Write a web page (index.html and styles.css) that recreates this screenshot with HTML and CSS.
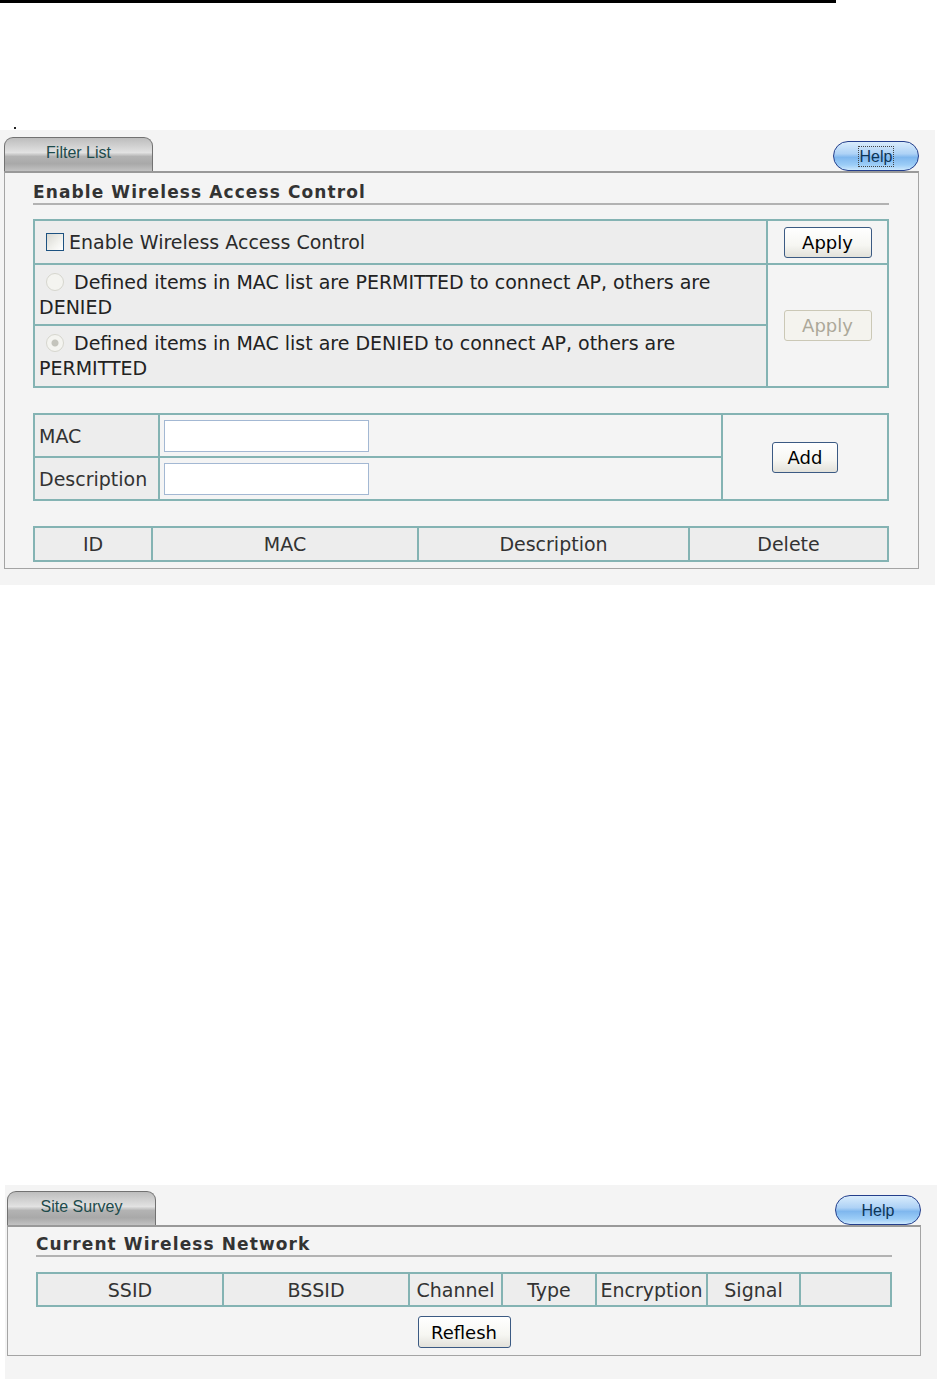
FILE: index.html
```html
<!DOCTYPE html>
<html lang="en">
<head>
    <meta charset="UTF-8">
    <title>Wireless Access Control</title>
    <link rel="stylesheet" href="styles.css">
</head>
<body>
    <div class="rule"></div>
    <div class="mark"></div>

    <!-- Filter list -->
    <div class="panel panel-filter">
        <div class="tabbar">
            <div class="tab">Filter List</div>
            <button class="help"><span class="focus">Help</span></button>
        </div>
        <div class="box">
            <h2 class="box-title">Enable Wireless Access Control</h2>

            <table class="grid mode">
                <tr class="row-enable">
                    <td class="cell-dark">
                        <label class="option"><input type="checkbox" class="check">Enable Wireless Access Control</label>
                    </td>
                    <td class="cell-light cell-btn"><button class="btn">Apply</button></td>
                </tr>
                <tr class="row-policy">
                    <td class="cell-dark">
                        <input type="radio" name="policy" class="radio" disabled> Defined items in MAC list are PERMITTED to connect AP, others are DENIED
                    </td>
                    <td class="cell-light cell-btn" rowspan="2"><button class="btn" disabled>Apply</button></td>
                </tr>
                <tr class="row-policy2">
                    <td class="cell-dark">
                        <input type="radio" name="policy" class="radio" checked disabled> Defined items in MAC list are DENIED to connect AP, others are PERMITTED
                    </td>
                </tr>
            </table>

            <table class="grid entry">
                <tr>
                    <td class="cell-dark label">MAC</td>
                    <td class="cell-light field"><input type="text" class="text-in"></td>
                    <td class="cell-light cell-btn add-cell" rowspan="2"><button class="btn btn-add">Add</button></td>
                </tr>
                <tr>
                    <td class="cell-dark label">Description</td>
                    <td class="cell-light field"><input type="text" class="text-in"></td>
                </tr>
            </table>

            <table class="grid list">
                <tr>
                    <td class="col-id">ID</td>
                    <td class="col-mac">MAC</td>
                    <td class="col-desc">Description</td>
                    <td>Delete</td>
                </tr>
            </table>
        </div>
    </div>

    <!-- Site survey -->
    <div class="panel panel-survey">
        <div class="tabbar">
            <div class="tab">Site Survey</div>
            <button class="help">Help</button>
        </div>
        <div class="box">
            <h2 class="box-title">Current Wireless Network</h2>

            <table class="grid survey">
                <tr>
                    <td class="col-ssid">SSID</td>
                    <td class="col-ssid">BSSID</td>
                    <td class="col-ch">Channel</td>
                    <td class="col-type">Type</td>
                    <td class="col-enc">Encryption</td>
                    <td class="col-sig">Signal</td>
                    <td></td>
                </tr>
            </table>

            <div class="actions">
                <button class="btn btn-refresh">Reflesh</button>
            </div>
        </div>
    </div>
</body>
</html>
```

FILE: styles.css
```css
body {
    margin: 0;
    font-family: "DejaVu Sans", sans-serif;
    color: #222;
    background-color: white;
}

.rule {
    width: 836px;
    height: 3px;
    background-color: black;
}

.mark {
    width: 2px;
    height: 2px;
    margin: 124px 0 0 14px;
    background-color: #222;
}

.panel {
    background-color: #f4f4f4;
    box-sizing: border-box;
}

.panel-filter {
    width: 935px;
    margin-top: 1px;
    padding: 7px 16px 16px 4px;
}

.panel-survey {
    width: 932px;
    margin: 600px 0 0 5px;
    padding: 6px 16px 23px 2px;
}

.tabbar {
    display: flex;
    justify-content: space-between;
    align-items: flex-end;
    height: 34px;
}

.tab {
    width: 149px;
    height: 34px;
    box-sizing: border-box;
    border: 1px solid #727272;
    border-bottom: none;
    border-radius: 9px 9px 0 0;
    background: linear-gradient(to bottom, #bdbdbd 0%, #d4d4d4 28%, #e2e2e2 44%, #b3b3b3 56%, #a9a9a9 78%, #c2c2c2 100%);
    font-family: "Liberation Sans", Arial, sans-serif;
    font-size: 16px;
    line-height: 30px;
    color: #1d4b4b;
    text-align: center;
}

.help {
    width: 86px;
    height: 30px;
    padding: 2px 0 0;
    border: 1px solid #243f8c;
    border-radius: 15px;
    background: linear-gradient(to bottom, #d9ecfc 0%, #aed2f6 42%, #7fb7ee 55%, #9ccdf7 82%, #cbe7fd 100%);
    font-family: "Liberation Sans", Arial, sans-serif;
    font-size: 16px;
    color: #0d3557;
    cursor: pointer;
}

.help .focus {
    padding: 1px 1px;
    outline: 1px dotted #444;
}

.box {
    border: 1px solid #a4a4a4;
    border-top: 2px solid #999;
    box-sizing: border-box;
}

.panel-filter .box {
    width: 915px;
    padding: 0 29px 6px 28px;
}

.panel-survey .box {
    width: 914px;
    padding: 0 28px 7px 28px;
}

.box-title {
    margin: 0;
    padding-top: 8px;
    font-size: 17px;
    line-height: 22px;
    font-weight: bold;
    letter-spacing: 1.1px;
    color: #333;
    border-bottom: 2px solid #b2b2b2;
}

.panel-survey .box-title {
    padding-top: 6px;
}

.grid {
    width: 100%;
    border-collapse: collapse;
    table-layout: fixed;
    margin-top: 14px;
    font-size: 19px;
}

.grid td {
    border: 2px solid #84b3b3;
    padding: 0 4px;
}

.cell-dark {
    background-color: #ededed;
}

.cell-light {
    background-color: #f4f4f4;
}

.cell-btn {
    width: 111px;
    text-align: center;
}

.mode td {
    line-height: 25px;
}

.row-enable td {
    height: 42px;
}

.row-policy td {
    height: 59px;
}

.row-policy2 td {
    height: 60px;
}

.option {
    display: flex;
    align-items: center;
    color: #2a2a2a;
}

.check {
    appearance: none;
    width: 18px;
    height: 18px;
    margin: 0 5px 0 7px;
    border: 1px solid #1d5281;
    background: linear-gradient(135deg, #d8d8d2 0%, #f2f2ee 60%, white 100%);
    box-sizing: border-box;
}

.radio {
    appearance: none;
    width: 18px;
    height: 18px;
    margin: 0 4px 0 7px;
    vertical-align: -2px;
    border: 1px solid #d6d6ce;
    border-radius: 50%;
    background-color: #f4f4f0;
    box-sizing: border-box;
}

.radio:checked {
    background: radial-gradient(circle, #c4c4bc 0, #c4c4bc 3px, #f4f4f0 4px);
}

.btn {
    height: 31px;
    padding: 0 10px;
    border: 1px solid #3b5a83;
    border-radius: 3px;
    background: linear-gradient(to bottom, white 0%, #f6f6f2 60%, #e2e1da 100%);
    font-family: "DejaVu Sans", sans-serif;
    font-size: 18px;
    color: black;
    cursor: pointer;
}

.mode .btn {
    width: 88px;
}

.btn:disabled {
    border-color: #cbc8b6;
    background: #f4f3ee;
    color: #aca899;
    cursor: default;
}

.entry {
    margin-top: 25px;
}

.entry td {
    height: 41px;
}

.label {
    width: 115px;
    color: #333;
}

.field {
    padding-left: 2px;
}

.add-cell {
    width: 156px;
}

.text-in {
    display: block;
    width: 205px;
    height: 32px;
    box-sizing: border-box;
    border: 1px solid #a3b8d3;
    background-color: white;
}

.btn-add {
    width: 66px;
    padding: 0;
}

.list {
    margin-top: 25px;
}

.list td,
.survey td {
    height: 32px;
    padding: 0;
    text-align: center;
    color: #333;
    background-color: #ededed;
}

.col-id {
    width: 116px;
}

.col-mac {
    width: 264px;
}

.col-desc {
    width: 269px;
}

.survey {
    margin-top: 15px;
}

.survey td {
    height: 31px;
}

.col-ssid {
    width: 184px;
}

.col-ch {
    width: 91px;
}

.col-type {
    width: 92px;
}

.col-enc {
    width: 109px;
}

.col-sig {
    width: 91px;
}

.actions {
    display: flex;
    justify-content: center;
    margin-top: 9px;
}

.btn-refresh {
    width: 93px;
    height: 32px;
    padding: 0;
}
```
